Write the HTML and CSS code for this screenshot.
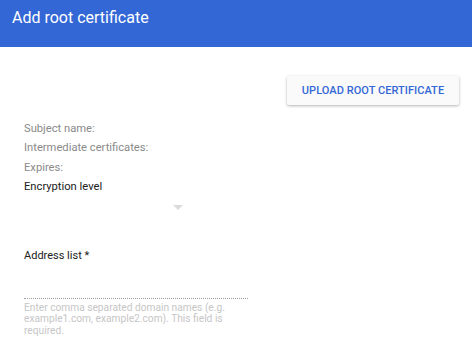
FILE: index.html
```html
<!DOCTYPE html>
<html>
<head>
    <title>Add root certificate</title>
    <link rel="stylesheet" href="styles.css">
</head>
<body>
    <div class="dialog-header">
        <h1>Add root certificate</h1>
    </div>
    <div class="dialog-body">
        <div class="upload-row">
            <button class="upload-btn">Upload root certificate</button>
        </div>
        <div class="cert-info">
            <div class="info-line">Subject name:</div>
            <div class="info-line">Intermediate certificates:</div>
            <div class="info-line">Expires:</div>
            <div class="info-line dark">Encryption level</div>
        </div>
        <div class="select-box">
            <span class="select-arrow"></span>
        </div>
        <div class="address-field">
            <label class="field-label">Address list *</label>
            <div class="field-input"></div>
            <div class="field-hint">Enter comma separated domain names (e.g. example1.com, example2.com). This field is required.</div>
        </div>
    </div>
</body>
</html>
```

FILE: styles.css
```css
* {
    margin: 0;
    padding: 0;
    box-sizing: border-box;
    font-family: 'Roboto', 'Liberation Sans', sans-serif;
}

body {
    background: #ffffff;
    width: 472px;
    height: 363px;
    overflow: hidden;
}

.dialog-header {
    background: #3367d6;
    height: 47px;
    padding: 8px 12px 0;
}

.dialog-header h1 {
    color: #ffffff;
    font-size: 16px;
    font-weight: 400;
    line-height: 20px;
}

.dialog-body {
    padding: 0 13px 0 24px;
}

.upload-row {
    display: flex;
    justify-content: flex-end;
    padding-top: 29px;
}

.upload-btn {
    height: 29px;
    width: 172px;
    background: #fafafa;
    border: none;
    border-radius: 2px;
    box-shadow: 0 1px 3px rgba(0, 0, 0, 0.3);
    color: #3367d6;
    font-size: 11px;
    font-weight: 500;
    letter-spacing: 0.05px;
    text-transform: uppercase;
}

.cert-info {
    margin-top: 14px;
}

.info-line {
    font-size: 11.2px;
    line-height: 19.4px;
    color: #8a8a8a;
}

.info-line.dark {
    color: #212121;
}

.select-box {
    width: 162px;
    height: 22px;
    display: flex;
    align-items: center;
    justify-content: flex-end;
}

.select-arrow {
    width: 0;
    height: 0;
    border-left: 5px solid transparent;
    border-right: 5px solid transparent;
    border-top: 5px solid #dcdcdc;
    margin-right: 3px;
}

.address-field {
    margin-top: 29px;
    width: 224px;
}

.field-label {
    display: block;
    font-size: 11px;
    line-height: 16px;
    color: #212121;
}

.field-input {
    height: 35px;
    border-bottom: 1px dotted #9e9e9e;
}

.field-hint {
    margin-top: 3px;
    font-size: 10.2px;
    line-height: 11.5px;
    color: #c6c6c6;
}
```
